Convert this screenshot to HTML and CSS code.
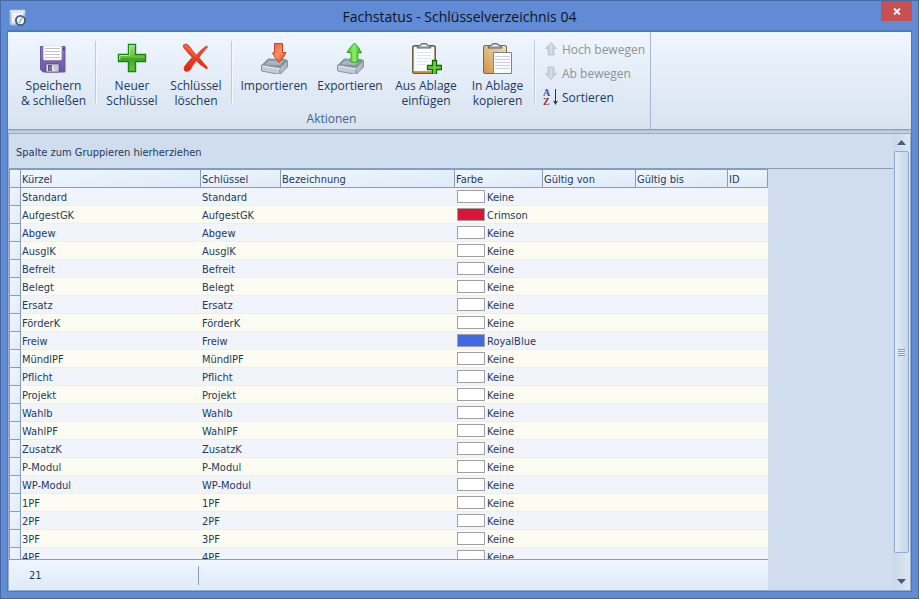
FILE: index.html
```html
<!DOCTYPE html>
<html lang="de">
<head>
<meta charset="utf-8">
<title>Fachstatus - Schlüsselverzeichnis 04</title>
<link rel="stylesheet" href="styles.css">
</head>
<body>
<div class="window">
  <header class="titlebar">
    <svg class="app-icon" width="18" height="18" viewBox="0 0 18 18" aria-hidden="true">
      <rect x="1" y="1" width="15" height="15" rx="1" fill="#b9d5f0" stroke="#8fb6dd"/>
      <rect x="3" y="3" width="11" height="11" fill="#fafcfe"/>
      <path d="M1 1.500h15v2H1z" fill="#e9eff5"/>
      <path d="M2 3.500h13M4 6h9M4 9h4M4 12h3" stroke="#cdd6df" stroke-dasharray="2 1"/>
      <circle cx="11.500" cy="11.500" r="4.600" fill="#eaf1f8" stroke="#455c73" stroke-width="1.900"/>
      <path d="M13.500 8.500L11 12l-1 2" stroke="#6a7f94" fill="none"/>
    </svg>
    <h1 class="title">Fachstatus - Schlüsselverzeichnis 04</h1>
    <button class="close" type="button" aria-label="Schließen">
      <svg width="8" height="7" viewBox="0 0 8 7"><path d="M1 .5l6 6M7 .5l-6 6" stroke="#fff" stroke-width="1.900"/></svg>
    </button>
  </header>

  <main class="client">
    <nav class="ribbon" aria-label="Aktionen">
      <section class="group">
        <div class="tools">
          <button class="tool tool-save" type="button">
            <svg width="32" height="32" viewBox="0 0 32 32" aria-hidden="true">
              <defs><linearGradient id="disk" x1="0" y1="0" x2="0" y2="1"><stop offset="0" stop-color="#8878bd"/><stop offset="1" stop-color="#6c55aa"/></linearGradient></defs>
              <path d="M2.500 4.500h24.500v25.500H5l-2.500-2.500z" fill="url(#disk)" stroke="#6a57a3"/>
              <path d="M5.500 4h18v13q0 1-1 1h-16q-1 0-1-1z" fill="#fff" stroke="#d9d5e8" stroke-width=".6"/>
              <path d="M7 6.500h15M7 9.500h15M7 12.500h15M7 15.500h15" stroke="#c0c3c6"/>
              <path d="M25 6h1.500v2H25z" fill="#463579"/>
              <path d="M8 22h13v8H8z" fill="#e1e3e6" stroke="#574584" stroke-width=".8"/>
              <path d="M10 23h4v6h-4z" fill="#5b5270"/><path d="M11 24h3v5h-3z" fill="#7a6da8"/>
              <path d="M15 23h5v6h-3z" fill="#c2c7cb"/>
            </svg>
            <span>Speichern<br>&amp; schließen</span>
          </button>
          <span class="divider"></span>
          <button class="tool tool-mid" type="button">
            <svg width="32" height="32" viewBox="0 0 32 32" aria-hidden="true">
              <defs><linearGradient id="plus" x1="0" y1="0" x2="0" y2="1"><stop offset="0" stop-color="#a5df83"/><stop offset=".48" stop-color="#62bd3c"/><stop offset=".52" stop-color="#43a524"/><stop offset="1" stop-color="#69c63f"/></linearGradient></defs>
              <path d="M12.500 2.500h7v10h10v7h-10v10h-7v-10h-10v-7h10z" fill="url(#plus)" stroke="#15870e" stroke-width="1.400"/>
              <path d="M13.500 13.500V3.700h5M3.700 18v-4.500h9" fill="none" stroke="#b6e79b"/>
            </svg>
            <span>Neuer<br>Schlüssel</span>
          </button>
          <button class="tool tool-mid" type="button">
            <svg width="32" height="32" viewBox="0 0 32 32" aria-hidden="true">
              <defs><linearGradient id="cross" x1="0" y1="0" x2="0" y2="1"><stop offset="0" stop-color="#f4573b"/><stop offset="1" stop-color="#e32409"/></linearGradient></defs>
              <path d="M3.500 3q3-2.500 5.500 1 3.200 5 7.500 9.300Q21 7.500 26.500 4l1 1q-5 4.500-8.700 10.500 4 5 8.200 9.500v2q-6-3.500-11-8.500-3.500 4.500-5.700 9-2.300 2.700-5.300 1.500-2-2.500 0-5 3-4 7.300-8.700Q7 10 3.800 5.500q-1-1.500-.3-2.500z" fill="url(#cross)" stroke="#e23a20" stroke-width="1"/>
              <path d="M5 3.500q2 0 3 1.800 3.500 5.200 8 9.500" fill="none" stroke="#ff8c70" stroke-width=".8"/>
            </svg>
            <span>Schlüssel<br>löschen</span>
          </button>
          <span class="divider"></span>
          <button class="tool tool-wide" type="button">
            <svg width="32" height="32" viewBox="0 0 32 32" aria-hidden="true">
              <defs>
                <linearGradient id="tray" x1="0" y1="0" x2="1" y2="1"><stop offset="0" stop-color="#d3dae2"/><stop offset="1" stop-color="#8f9ba8"/></linearGradient>
                <linearGradient id="down" x1="0" y1="0" x2="1" y2="1"><stop offset="0" stop-color="#e3613e"/><stop offset=".5" stop-color="#f98e68"/><stop offset="1" stop-color="#d63a14"/></linearGradient>
              </defs>
              <path d="M10 17l18 .5 1.500 1.500-7 6.500L3.500 23.500z" fill="#8794a2" stroke="#8a96a3"/>
              <path d="M10.500 18.500l15 .5-4 4-14.500-.5z" fill="#a9b5c2"/>
              <path d="M3.500 23l18.500 3v6.500L3.500 29z" fill="#c3ccd5" stroke="#8994a0"/>
              <path d="M22 26l7.500-7v6L22 32.500z" fill="url(#tray)" stroke="#8994a0"/>
              <path d="M4.500 24l17.500 3" stroke="#eef2f6"/>
              <path d="M16.500 1.500h8v9h3.500q-2 5-7 10-4-4.500-6.500-9.500l2-.5z" fill="url(#down)" stroke="#c8431f"/>
            </svg>
            <span>Importieren</span>
          </button>
          <button class="tool tool-wide" type="button">
            <svg width="32" height="32" viewBox="0 0 32 32" aria-hidden="true">
              <defs><linearGradient id="up" x1="0" y1="0" x2="1" y2="0"><stop offset="0" stop-color="#43bb21"/><stop offset=".5" stop-color="#8cf067"/><stop offset="1" stop-color="#30a519"/></linearGradient></defs>
              <path d="M10 17l18 .5 1.500 1.500-7 6.500L3.500 23.500z" fill="#8794a2" stroke="#8a96a3"/>
              <path d="M10.500 18.500l15 .5-4 4-14.500-.5z" fill="#a9b5c2"/>
              <path d="M3.500 23l18.500 3v6.500L3.500 29z" fill="#c3ccd5" stroke="#8994a0"/>
              <path d="M22 26l7.500-7v6L22 32.500z" fill="url(#tray)" stroke="#8994a0"/>
              <path d="M4.500 24l17.500 3" stroke="#eef2f6"/>
              <path d="M20.500 1Q25 5 27.500 11l-3.500-.5q-1 5 .5 9-4 2-8 0 1-5 .5-9h-4Q16 5 20.500 1z" fill="url(#up)" stroke="#2fa41b"/>
            </svg>
            <span>Exportieren</span>
          </button>
          <button class="tool tool-wide" type="button">
            <svg width="32" height="32" viewBox="0 0 32 32" aria-hidden="true">
              <defs><linearGradient id="board" x1="0" y1="0" x2="0" y2="1"><stop offset="0" stop-color="#8b826b"/><stop offset="1" stop-color="#c38a35"/></linearGradient></defs>
              <rect x="2.500" y="3.500" width="23" height="28" rx="1.500" fill="url(#board)" stroke="#6e5f3e"/>
              <path d="M4 5h20v24H4z" fill="#fbfcfd" stroke="#dadddf" stroke-width=".5"/>
              <path d="M7 10.500h14M7 13.500h14M7 16.500h14M7 19.500h11M7 22.500h9" stroke="#e0e4e8"/>
              <path d="M7 6q0-2 3-2.500Q10 1.500 14 1.500t4 2q3 .5 3 2.500z" fill="#b3bac6" stroke="#566071"/>
              <path d="M11.500 3.500h5" stroke="#fff"/>
              <path d="M22.500 18.500h4v5h5v4h-5v5h-4v-5h-5v-4h5z" fill="#69cf3a" stroke="#15660c" stroke-width="1.300"/>
            </svg>
            <span>Aus Ablage<br>einfügen</span>
          </button>
          <button class="tool tool-copy" type="button">
            <svg width="32" height="32" viewBox="0 0 32 32" aria-hidden="true">
              <defs><linearGradient id="paste" x1="1" y1="0" x2="0" y2="1"><stop offset="0" stop-color="#f0dfb9"/><stop offset="1" stop-color="#cf9448"/></linearGradient></defs>
              <rect x="1.500" y="3.500" width="23" height="28" rx="1.500" fill="url(#paste)" stroke="#80693c"/>
              <path d="M6 6q0-2 3-2.500Q9 1.500 13 1.500t4 2q3 .5 3 2.500z" fill="#b3bac6" stroke="#566071"/>
              <path d="M10.500 3.500h5" stroke="#fff"/>
              <path d="M11.500 10.500h18v21h-18z" fill="#fafbfd" stroke="#798590"/>
              <path d="M13 14.500h15M13 17.500h15M13 20.500h15M13 23.500h15M13 26.500h15" stroke="#c9d2da"/>
            </svg>
            <span>In Ablage<br>kopieren</span>
          </button>
          <span class="divider"></span>
          <div class="stack">
            <button class="small" type="button" disabled>
              <svg width="16" height="16" viewBox="0 0 16 16" aria-hidden="true"><path d="M8 1.500l5.500 6H11V14H5V7.500H2.500z" fill="#cbd0d8" stroke="#c3c8d0"/><path d="M8 3v10" stroke="#d9dde3" stroke-width="2"/></svg>
              Hoch bewegen
            </button>
            <button class="small" type="button" disabled>
              <svg width="16" height="16" viewBox="0 0 16 16" aria-hidden="true"><path d="M8 14.500l5.500-6H11V2H5v6.500H2.500z" fill="#cbd0d8" stroke="#c3c8d0"/><path d="M8 3v10" stroke="#d9dde3" stroke-width="2"/></svg>
              Ab bewegen
            </button>
            <button class="small" type="button">
              <svg width="16" height="16" viewBox="0 0 16 16" aria-hidden="true">
                <text class="sort-a" x="0" y="7">A</text><text class="sort-z" x="0" y="16">Z</text>
                <path d="M12.500 0v14" stroke="#333"/><path d="M10 11.500l2.500 1 2.500-1-2.500 4.500z" fill="#333"/>
              </svg>
              Sortieren
            </button>
          </div>
        </div>
        <h2 class="caption">Aktionen</h2>
      </section>
    </nav>
    <div class="strip"></div>

    <div class="grid">
      <div class="grid-main">
        <div class="group-panel">Spalte zum Gruppieren hierherziehen</div>
        <div class="rows">
          <table>
            <colgroup><col class="c-mark"><col class="c-short"><col class="c-key"><col class="c-name"><col class="c-color"><col class="c-from"><col class="c-to"><col class="c-id"></colgroup>
            <thead>
              <tr><th></th><th>Kürzel</th><th>Schlüssel</th><th>Bezeichnung</th><th>Farbe</th><th>Gültig von</th><th>Gültig bis</th><th>ID</th></tr>
            </thead>
            <tbody>
              <tr><td></td><td>Standard</td><td>Standard</td><td></td><td><i class="swatch"></i>Keine</td><td></td><td></td><td></td></tr>
              <tr><td></td><td>AufgestGK</td><td>AufgestGK</td><td></td><td><i class="swatch crimson"></i>Crimson</td><td></td><td></td><td></td></tr>
              <tr><td></td><td>Abgew</td><td>Abgew</td><td></td><td><i class="swatch"></i>Keine</td><td></td><td></td><td></td></tr>
              <tr><td></td><td>AusglK</td><td>AusglK</td><td></td><td><i class="swatch"></i>Keine</td><td></td><td></td><td></td></tr>
              <tr><td></td><td>Befreit</td><td>Befreit</td><td></td><td><i class="swatch"></i>Keine</td><td></td><td></td><td></td></tr>
              <tr><td></td><td>Belegt</td><td>Belegt</td><td></td><td><i class="swatch"></i>Keine</td><td></td><td></td><td></td></tr>
              <tr><td></td><td>Ersatz</td><td>Ersatz</td><td></td><td><i class="swatch"></i>Keine</td><td></td><td></td><td></td></tr>
              <tr><td></td><td>FörderK</td><td>FörderK</td><td></td><td><i class="swatch"></i>Keine</td><td></td><td></td><td></td></tr>
              <tr><td></td><td>Freiw</td><td>Freiw</td><td></td><td><i class="swatch royal"></i>RoyalBlue</td><td></td><td></td><td></td></tr>
              <tr><td></td><td>MündlPF</td><td>MündlPF</td><td></td><td><i class="swatch"></i>Keine</td><td></td><td></td><td></td></tr>
              <tr><td></td><td>Pflicht</td><td>Pflicht</td><td></td><td><i class="swatch"></i>Keine</td><td></td><td></td><td></td></tr>
              <tr><td></td><td>Projekt</td><td>Projekt</td><td></td><td><i class="swatch"></i>Keine</td><td></td><td></td><td></td></tr>
              <tr><td></td><td>Wahlb</td><td>Wahlb</td><td></td><td><i class="swatch"></i>Keine</td><td></td><td></td><td></td></tr>
              <tr><td></td><td>WahlPF</td><td>WahlPF</td><td></td><td><i class="swatch"></i>Keine</td><td></td><td></td><td></td></tr>
              <tr><td></td><td>ZusatzK</td><td>ZusatzK</td><td></td><td><i class="swatch"></i>Keine</td><td></td><td></td><td></td></tr>
              <tr><td></td><td>P-Modul</td><td>P-Modul</td><td></td><td><i class="swatch"></i>Keine</td><td></td><td></td><td></td></tr>
              <tr><td></td><td>WP-Modul</td><td>WP-Modul</td><td></td><td><i class="swatch"></i>Keine</td><td></td><td></td><td></td></tr>
              <tr><td></td><td>1PF</td><td>1PF</td><td></td><td><i class="swatch"></i>Keine</td><td></td><td></td><td></td></tr>
              <tr><td></td><td>2PF</td><td>2PF</td><td></td><td><i class="swatch"></i>Keine</td><td></td><td></td><td></td></tr>
              <tr><td></td><td>3PF</td><td>3PF</td><td></td><td><i class="swatch"></i>Keine</td><td></td><td></td><td></td></tr>
              <tr><td></td><td>4PF</td><td>4PF</td><td></td><td><i class="swatch"></i>Keine</td><td></td><td></td><td></td></tr>
            </tbody>
          </table>
        </div>
        <footer class="summary"><span class="count">21</span></footer>
      </div>
      <div class="scrollbar">
        <button class="arrow" type="button" aria-label="Nach oben"><svg width="9" height="5" viewBox="0 0 9 5"><path d="M4.500 0L9 5H0z" fill="#4c5a83"/></svg></button>
        <div class="thumb"><span class="grip"></span></div>
        <div class="track"></div>
        <button class="arrow" type="button" aria-label="Nach unten"><svg width="9" height="5" viewBox="0 0 9 5"><path d="M4.500 5L9 0H0z" fill="#4c5a83"/></svg></button>
      </div>
    </div>
  </main>
</div>
</body>
</html>
```
FILE: styles.css
```css
* { box-sizing: border-box; }

body {
  margin: 0;
  color: #1e395b;
  font: 12px/15px "Open Sans", "Noto Sans", sans-serif;
}

button {
  margin: 0;
  padding: 0;
  border: 0;
  background: none;
  color: inherit;
  font: inherit;
}

svg { display: block; flex: none; }

.window {
  display: flex;
  flex-direction: column;
  height: 100vh;
  padding: 0 6px 6px;
  border: 1px solid #4769a6;
  background: #618bd5;
}

.titlebar {
  display: grid;
  grid-template-columns: 48px 1fr 48px;
  flex: none;
  height: 29px;
}

.app-icon { margin: 8px 0 0 2px; }

.title {
  margin: 0;
  color: #0c1422;
  font-size: 14px;
  font-weight: 400;
  line-height: 31px;
  text-align: center;
}

.close {
  display: flex;
  align-items: center;
  justify-content: center;
  justify-self: end;
  width: 31px;
  height: 20px;
  background: #c75050;
}

.client {
  display: flex;
  flex: 1;
  flex-direction: column;
  min-height: 0;
  border: 1px solid #4f77ba;
  border-top: 2px solid #4f77ba;
}

.ribbon {
  display: flex;
  flex: none;
  height: 98px;
  border-bottom: 1px solid #879cb8;
  background: linear-gradient(#eff6fe, #e3ecf7 50%, #d7e3f0);
}

.group {
  display: flex;
  flex-direction: column;
  padding: 5px 2px 0 7px;
  border-right: 1px solid #a5b7ce;
}

.tools { display: flex; height: 74px; }

.tool {
  display: flex;
  flex: none;
  flex-direction: column;
  align-items: center;
  gap: 4px;
  padding-top: 5px;
  text-align: center;
  white-space: nowrap;
}

.tool-save { width: 77px; }
.tool-wide { width: 76px; }
.tool-mid { width: 64px; }
.tool-copy { width: 67px; }

.divider {
  flex: none;
  width: 2px;
  height: 62px;
  margin: 4px 3px 0;
  border-left: 1px solid #bccbdf;
  border-right: 1px solid #f3f8fd;
}

.stack { display: flex; flex-direction: column; }

.small {
  display: flex;
  align-items: center;
  gap: 3px;
  height: 24px;
  padding: 0 3px 0 4px;
  white-space: nowrap;
}

.small:disabled { color: #929292; }

.sort-a, .sort-z { font: bold 10px "Liberation Serif", serif; }
.sort-a { fill: #3353a4; }
.sort-z { fill: #8c3838; }

.caption {
  margin: 0;
  color: #465f8c;
  font-size: 12px;
  font-weight: 400;
  line-height: 15px;
  text-align: center;
}

.strip {
  flex: none;
  height: 4px;
  border-bottom: 1px solid #93aace;
  background: linear-gradient(#aec0d5, #c6d6e8);
}

.grid {
  display: flex;
  flex: 1;
  min-height: 0;
  border: 1px solid #9dafc9;
  border-top: 0;
  background: #d0ddee;
  font: 11px/15px "DejaVu Sans Condensed", "Noto Sans", sans-serif;
}

.grid-main {
  display: flex;
  flex: 1;
  flex-direction: column;
  min-width: 0;
}

.group-panel {
  flex: none;
  height: 35px;
  padding: 0 7px;
  border-bottom: 1px solid #859ebf;
  line-height: 38px;
}

.rows { flex: 1; min-height: 0; overflow: hidden; }

table {
  width: 759px;
  border-top: 1px solid #859ebf;
  border-left: 1px solid #859ebf;
  border-collapse: separate;
  border-spacing: 0;
  table-layout: fixed;
}

.c-mark { width: 11px; }
.c-short { width: 180px; }
.c-key { width: 80px; }
.c-name { width: 174px; }
.c-color { width: 88px; }
.c-from { width: 93px; }
.c-to { width: 92px; }
.c-id { width: 40px; }

th, td {
  height: 18px;
  padding: 2px 1px 0;
  text-align: left;
  white-space: nowrap;
}

th {
  border-right: 1px solid #859ebf;
  border-bottom: 1px solid #859ebf;
  background: linear-gradient(170deg, #f1f6fd, #deebf9);
  font-weight: 400;
}

td { border-bottom: 1px solid #ebeef3; }

tbody tr { background: #f1f5fb; }
tbody tr:nth-child(even) { background: #fcfcf3; }

td:first-child {
  border-right: 1px solid #859ebf;
  border-bottom: 1px solid #859ebf;
  background: linear-gradient(120deg, #f1f6fd, #deebf9);
}

.swatch {
  display: inline-block;
  width: 28px;
  height: 13px;
  margin: 0 2px 0 1px;
  border: 1px solid #a0a0a0;
  background: #fff;
  vertical-align: -2px;
}

.crimson { background: #dc143c; }
.royal { background: #4169e1; }

.summary {
  display: flex;
  flex: none;
  align-items: center;
  width: 759px;
  height: 31px;
  border-top: 1px solid #859ebf;
  background: linear-gradient(#eff5fd, #deebf8);
}

.count {
  width: 190px;
  padding-left: 20px;
  border-right: 1px solid #859ebf;
  line-height: 19px;
}

.scrollbar {
  display: flex;
  flex: none;
  flex-direction: column;
  width: 17px;
  background: linear-gradient(90deg, #c8d7e8, #dce7f2);
}

.arrow {
  display: flex;
  align-items: center;
  justify-content: center;
  height: 17px;
}

.thumb {
  display: flex;
  flex: 20;
  align-items: center;
  justify-content: center;
  margin: 0 1px;
  border: 1px solid #8eabd3;
  border-radius: 2px;
  background: linear-gradient(90deg, #e1eaf4, #c6d8ec);
}

.track { flex: 1; }

.grip {
  width: 7px;
  height: 7px;
  background: repeating-linear-gradient(#7e9ac8 0 1px, #e6eef7 1px 2px);
}
```
